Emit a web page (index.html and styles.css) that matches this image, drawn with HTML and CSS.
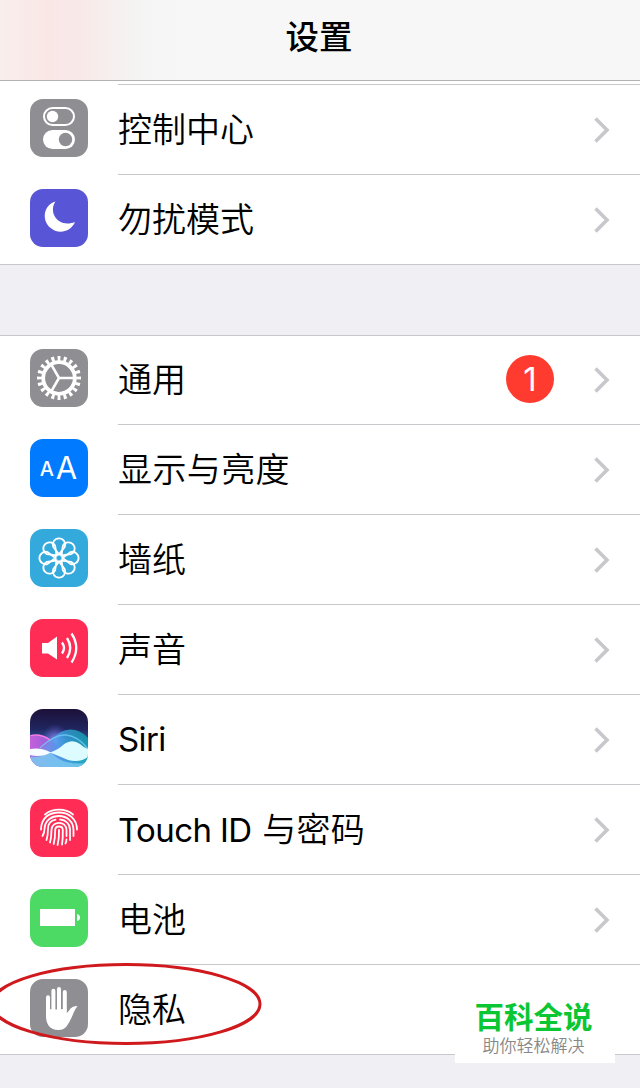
FILE: index.html
```html
<!DOCTYPE html>
<html lang="zh-CN">
<head>
    <meta charset="UTF-8">
    <meta name="viewport" content="width=device-width, initial-scale=1.0">
    <title>设置</title>
    <link rel="stylesheet" href="styles.css">
</head>
<body>
    <svg class="defs" aria-hidden="true">
        <symbol id="chevron" viewBox="0 0 18 28">
            <path d="M2.5 2.5L14 14L2.5 25.5" fill="none" stroke="#c7c7cc" stroke-width="3.6"/>
        </symbol>
    </svg>

    <header class="navbar">
        <h1>设置</h1>
    </header>

    <main>
        <ul class="group group-top">
            <li class="row">
                <svg class="icon gray" viewBox="0 0 58 58">
                    <rect x="14" y="9" width="30" height="17" rx="8.5" fill="none" stroke="#fff" stroke-width="2"/>
                    <circle cx="22.5" cy="17.5" r="5.7" fill="#fff"/>
                    <rect x="13" y="31" width="32" height="19" rx="9.5" fill="#fff"/>
                    <circle cx="35.5" cy="40.5" r="6.7" fill="#8e8e93"/>
                </svg>
                <span class="label">控制中心</span>
                <svg class="chevron"><use href="#chevron"/></svg>
            </li>
            <li class="row">
                <svg class="icon purple" viewBox="0 0 58 58">
                    <path d="M25.5 12.5C13.5 16 11.5 31 20 38.5C28 46 41 43 45 33C36 36.5 27.5 33.5 24.3 26.5C22 21.5 22.7 16.5 25.5 12.5Z" fill="#fff"/>
                </svg>
                <span class="label">勿扰模式</span>
                <svg class="chevron"><use href="#chevron"/></svg>
            </li>
        </ul>

        <ul class="group">
            <li class="row">
                <svg class="icon gray" viewBox="0 0 58 58">
                    <g fill="none" stroke="#fff">
                        <circle cx="29" cy="29" r="19.5" stroke-width="5" pathLength="200" stroke-dasharray="4.8 5.2" stroke-dashoffset="2.4"/>
                        <circle cx="29" cy="29" r="15.8" stroke-width="3.8"/>
                        <path d="M29 29H45M29 29L21 15.2M29 29L21 42.8" stroke-width="2.6"/>
                    </g>
                </svg>
                <span class="label">通用</span>
                <span class="badge">1</span>
                <svg class="chevron"><use href="#chevron"/></svg>
            </li>
            <li class="row">
                <svg class="icon blue" viewBox="0 0 58 58">
                    <text class="letter small" x="9.8" y="37">A</text>
                    <text class="letter large" x="25.8" y="40">A</text>
                </svg>
                <span class="label wide">显示与亮度</span>
                <svg class="chevron"><use href="#chevron"/></svg>
            </li>
            <li class="row">
                <svg class="icon cyan" viewBox="0 0 58 58">
                    <g transform="translate(29 29)" fill="none" stroke="#fff" stroke-width="1.8">
                        <circle r="3.6"/>
                        <path id="petal" d="M0 -3.6L-5.8 -11.2A6.2 6.2 0 1 1 5.8 -11.2Z"/>
                        <use href="#petal" transform="rotate(45)"/>
                        <use href="#petal" transform="rotate(90)"/>
                        <use href="#petal" transform="rotate(135)"/>
                        <use href="#petal" transform="rotate(180)"/>
                        <use href="#petal" transform="rotate(225)"/>
                        <use href="#petal" transform="rotate(270)"/>
                        <use href="#petal" transform="rotate(315)"/>
                    </g>
                </svg>
                <span class="label">墙纸</span>
                <svg class="chevron"><use href="#chevron"/></svg>
            </li>
            <li class="row">
                <svg class="icon pink" viewBox="0 0 58 58">
                    <path d="M12 24H18L27 17.5V40.5L18 34.5H12Z" fill="#fff"/>
                    <path d="M32 23.5Q36 29 32 34.5M37 19Q43.5 29 37 39M41.5 14.5Q51 29 41.5 43.5" fill="none" stroke="#fff" stroke-width="2.3"/>
                </svg>
                <span class="label">声音</span>
                <svg class="chevron"><use href="#chevron"/></svg>
            </li>
            <li class="row">
                <svg class="icon" viewBox="0 0 58 58">
                    <defs>
                        <linearGradient id="night" x1="0" y1="0" x2="0" y2="1">
                            <stop offset="0" stop-color="#1c1038"/>
                            <stop offset=".35" stop-color="#20265f"/>
                            <stop offset=".65" stop-color="#3672b4"/>
                            <stop offset="1" stop-color="#5aaede"/>
                        </linearGradient>
                        <linearGradient id="magenta" x1="0" y1="0" x2="1" y2="0">
                            <stop offset="0" stop-color="#c75fdc"/>
                            <stop offset=".6" stop-color="#8566df" stop-opacity=".8"/>
                            <stop offset="1" stop-color="#4a8ce0" stop-opacity=".2"/>
                        </linearGradient>
                        <linearGradient id="aqua" x1="0" y1="0" x2="1" y2="0">
                            <stop offset="0" stop-color="#7a9ef0" stop-opacity=".5"/>
                            <stop offset=".5" stop-color="#42a6ed"/>
                            <stop offset="1" stop-color="#0eaab0"/>
                        </linearGradient>
                        <radialGradient id="glow">
                            <stop offset="0" stop-color="#a998ff" stop-opacity=".9"/>
                            <stop offset="1" stop-color="#5d5ddc" stop-opacity="0"/>
                        </radialGradient>
                    </defs>
                    <rect width="58" height="58" fill="url(#night)"/>
                    <ellipse cx="25" cy="32" rx="14" ry="17" fill="url(#glow)"/>
                    <path d="M0 28Q10 23 22 32Q38 43 58 58H0Z" fill="url(#magenta)"/>
                    <path d="M0 46Q12 42 21 31Q32 18 45 21Q53 23 58 29V58H0Z" fill="url(#aqua)" opacity=".75"/>
                    <path d="M10 39Q25 25 36 26Q48 27 58 40" fill="none" stroke="#70c9f5" stroke-width="1.5" opacity=".8"/>
                    <path d="M0 27Q10 24 20 31" fill="none" stroke="#fa7ce4" stroke-width="1.5"/>
                    <path d="M0 48Q11 49 21 43Q32 57 58 54V58H0Z" fill="#7ccbf0" opacity=".8"/>
                    <path d="M0 40Q11 38 21 43.5Q11 49 0 46Z" fill="#f6fcff"/>
                    <path d="M20 43.5Q28 41 33 36Q42 29 50 35Q54 39 58 40V48Q50 54 38 51Q29 47 20 43.5Z" fill="#ddfcff"/>
                </svg>
                <span class="label latin">Siri</span>
                <svg class="chevron"><use href="#chevron"/></svg>
            </li>
            <li class="row">
                <svg class="icon pink" viewBox="0 0 58 58">
                    <g fill="none" stroke="#fff" stroke-width="1.8" stroke-linecap="round">
                        <path d="M15 15.5C22.5 9 35.5 9 43 15.5"/>
                        <path d="M11 30.5C11.3 18 20 13.5 29 13.5C39 13.5 47 20 47 30.5"/>
                        <path d="M12.5 37Q14.5 34 14.5 30C15 20.5 22 17 29 17C37 17 43.5 22.5 43.5 31V37"/>
                        <path d="M16.5 41Q18 36 18 30C18 25 21 21.5 25.5 20.7M30 20.5C36 20.9 40 25 40 31V41"/>
                        <path d="M20 43.5Q21.5 38 21.5 31C21.5 21.5 36.5 21.5 36.5 31V37M36.5 40.5Q36.4 42.5 35.5 44.5"/>
                        <path d="M23.7 45Q25.2 39 25.2 31C25.2 26.3 32.8 26.3 32.8 31Q33 39.5 32 45.5"/>
                        <path d="M29 31Q29.2 39.5 27.6 46"/>
                    </g>
                </svg>
                <span class="label latin">Touch ID <span class="cjk">与密码</span></span>
                <svg class="chevron"><use href="#chevron"/></svg>
            </li>
            <li class="row">
                <svg class="icon green" viewBox="0 0 58 58">
                    <rect x="10" y="20" width="35" height="17" rx=".5" fill="#fff"/>
                    <path d="M47 25Q50 25.5 50 28.5Q50 31.5 47 32Z" fill="#fff"/>
                </svg>
                <span class="label">电池</span>
                <svg class="chevron"><use href="#chevron"/></svg>
            </li>
            <li class="row">
                <svg class="icon gray" viewBox="0 0 58 58">
                    <g fill="none" stroke="#fff" stroke-width="4" stroke-linecap="round">
                        <path d="M18 33V18.2M23.4 31V11.8M29 31V10M34.8 31V13"/>
                    </g>
                    <path d="M16 29.5Q26 31.5 36.8 29.5V34Q39 32 40.5 29.5Q43 26.5 47.5 27Q45 30 43.5 34Q40 43 36.5 47.5Q33.5 51 28.5 51C19 51 16 44 16 37Z" fill="#fff"/>
                </svg>
                <span class="label">隐私</span>
            </li>
        </ul>
    </main>

    <svg class="marker" viewBox="0 0 270 86">
        <ellipse cx="126" cy="43" rx="134" ry="39.5" fill="none" stroke="#cf191c" stroke-width="3"/>
    </svg>

    <div class="watermark">
        <strong>百科全说</strong>
        <span>助你轻松解决</span>
    </div>
</body>
</html>
```
FILE: styles.css
```css
* {
    margin: 0;
    padding: 0;
    box-sizing: border-box;
}

body {
    position: relative;
    height: 1088px;
    overflow: hidden;
    background: #efeff4;
    color: #000;
    font-family: "Noto Sans CJK SC", sans-serif;
}

.defs {
    display: none;
}

.navbar {
    height: 81px;
    padding-top: 11px;
    border-bottom: 1px solid #b2b2b2;
    background: linear-gradient(90deg, #f9eeec 0, #f9e7e6 48px, #f8eae9 85px, #f5f1f0 120px, #f4f5f4 145px, #f7f7f7 190px);
    text-align: center;
}

.navbar h1 {
    padding-right: 2px;
    font-size: 33.5px;
    font-weight: 500;
    line-height: 48px;
}

.group {
    margin-bottom: 70px;
    border-bottom: 1px solid #c8c7cc;
    background: #fff;
    box-shadow: 0 -1px 0 #c8c7cc;
    list-style: none;
}

.group-top {
    padding-top: 4px;
    box-shadow: none;
    background: linear-gradient(#c8c7cc, #c8c7cc) 118px 3px / 100% 1px no-repeat #fff;
    margin-bottom: 71px;
}

.row {
    display: flex;
    align-items: center;
    height: 90px;
    padding: 0 29px 4px 30px;
    background: linear-gradient(#c8c7cc, #c8c7cc) 118px 100% / 100% 1px no-repeat;
}

.row:last-child {
    height: 89px;
    padding-bottom: 3px;
    background: none;
}

.group:not(.group-top) .row:first-child {
    height: 89px;
    padding-bottom: 5px;
}

.icon {
    flex: none;
    width: 58px;
    height: 58px;
    margin-right: 30px;
    border-radius: 13px;
}

.gray { background: #8e8e93; }
.purple { background: #5856d6; }
.blue { background: #007aff; }
.cyan { background: #34aadc; }
.pink { background: #ff2d55; }
.green { background: #4cd964; }

.letter {
    fill: #fff;
    font-family: Inter, sans-serif;
}

.small {
    font-size: 20px;
    font-weight: 500;
}

.large {
    font-size: 31px;
    font-weight: 400;
}

.label {
    flex: 1;
    font-size: 34px;
    font-weight: 350;
    line-height: 50px;
    white-space: nowrap;
}

.wide {
    letter-spacing: 0.4px;
}

.latin {
    padding-top: 2px;
    font-family: Inter, "Noto Sans CJK SC", sans-serif;
    font-size: 33px;
    font-weight: 400;
    letter-spacing: -0.6px;
}

.cjk {
    margin-left: 2px;
    font-family: "Noto Sans CJK SC", sans-serif;
    font-size: 34px;
    font-weight: 350;
    letter-spacing: 0.3px;
}

.badge {
    width: 48px;
    height: 48px;
    margin-top: 2px;
    margin-right: 39px;
    border-radius: 50%;
    background: #ff3b30;
    color: #fff;
    font-family: Inter, sans-serif;
    font-size: 33px;
    font-weight: 400;
    line-height: 48px;
    text-align: center;
}

.chevron {
    flex: none;
    width: 18px;
    height: 28px;
    margin-top: 4px;
}

/* hand-drawn ring over the privacy row */
.marker {
    position: absolute;
    left: 0;
    top: 961px;
    width: 270px;
    height: 86px;
}

.watermark {
    position: absolute;
    left: 455px;
    top: 990px;
    display: flex;
    flex-direction: column;
    align-items: center;
    width: 160px;
    height: 73px;
    padding-top: 7px;
    padding-right: 3px;
    background: #fff;
}

.watermark strong {
    color: #0ac632;
    font-size: 29.5px;
    font-weight: 700;
    line-height: 37px;
}

.watermark span {
    color: #888;
    font-size: 17px;
    font-weight: 350;
    line-height: 21px;
}
```
